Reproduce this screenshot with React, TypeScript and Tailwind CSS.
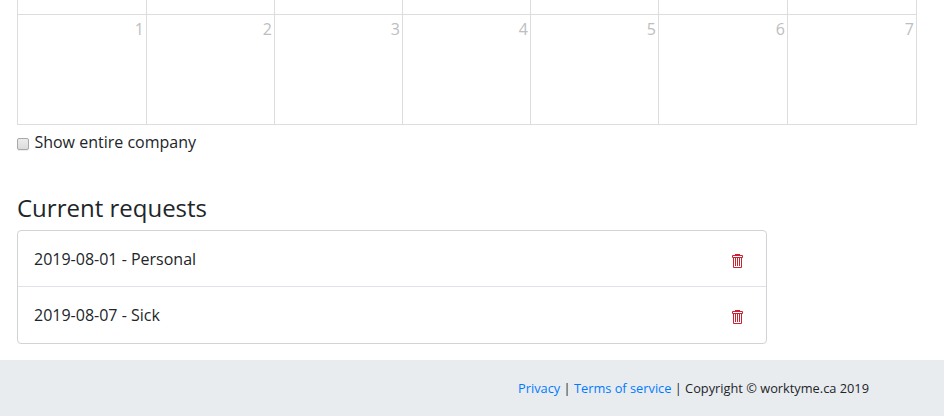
import React from "react";

const days = [1, 2, 3, 4, 5, 6, 7];
const requests = ["2019-08-01 - Personal", "2019-08-07 - Sick"];

function TrashIcon() {
  return (
    <svg className="mt-1" width="11" height="14" viewBox="0 0 11 14" fill="none" stroke="#cb2431">
      <path d="M3 .5h5M.5 1.500h10v2H.5zM1.500 3.500v10h8v-10" />
      <path d="M3.500 4v8M5.500 4v8M7.500 4v8" />
    </svg>
  );
}

export default function App() {
  return (
    <div className="h-[416px] w-[944px] overflow-hidden bg-white font-['Open_Sans',sans-serif] text-base leading-6 text-[#212529]">
      <main className="flow-root h-[360px] pl-[17px]">
        <div className="grid h-[125px] w-[900px] grid-cols-[129px_128px_128px_128px_128px_129px_129px] grid-rows-[14px_111px] border-l border-[#ddd]">
          {days.map((d) => <div key={`p${d}`} className="border-r border-[#ddd]" />)}
          {days.map((d) => (
            <div key={d} className="border border-l-0 border-[#ddd] pt-[2px] pr-[2px] text-right text-[#bcbebf]">{d}</div>
          ))}
        </div>
        <label className="flex h-[34px] items-center gap-[4.4px]">
          <input type="checkbox" className="mt-1 mr-px h-3 w-3 appearance-none rounded-[2px] border border-[#a9a9a9] bg-linear-to-b from-[#ececec] to-[#dcdcdc] shadow-[0_1px_0_#eeeeee]" />
          <span>Show entire company</span>
        </label>
        <h4 className="mt-[34px] text-2xl leading-[29px]">Current requests</h4>
        <ul className="mt-2 w-[750px] rounded border border-[#d2d3d4]">
          {requests.map((r) => (
            <li key={r} className="flex h-14 items-center justify-between border-b border-[#dee2e6] pr-[23px] pl-4 last:border-b-0">
              <span>{r}</span><TrashIcon />
            </li>
          ))}
        </ul>
      </main>
      <footer className="flex h-14 items-center justify-end bg-[#e9ecef] pr-[75px] text-[12.8px]">
        <p><a className="text-[#007bff]">Privacy</a> | <a className="text-[#007bff]">Terms of service</a> | Copyright © worktyme.ca 2019</p>
      </footer>
    </div>
  );
}
